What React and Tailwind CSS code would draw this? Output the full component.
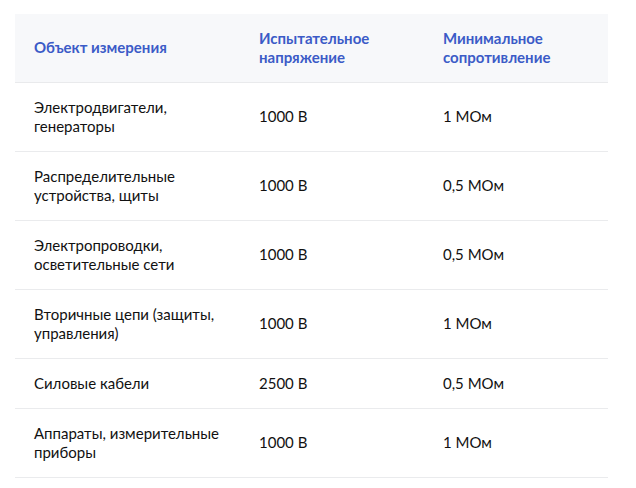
const rows = [
  ["Электродвигатели, генераторы", "1000 В", "1 МОм"],
  ["Распределительные устройства, щиты", "1000 В", "0,5 МОм"],
  ["Электропроводки, осветительные сети", "1000 В", "0,5 МОм"],
  ["Вторичные цепи (защиты, управления)", "1000 В", "1 МОм"],
  ["Силовые кабели", "2500 В", "0,5 МОм"],
  ["Аппараты, измерительные приборы", "1000 В", "1 МОм"],
];

export default function App() {
  return (
    <div className="w-[636px] h-[488px] bg-white pt-[14px] pl-[15px]" style={{ fontFamily: "Lato, 'Noto Sans', sans-serif" }}>
      <table className="w-[593px] border-collapse text-[15px] leading-[19px]">
        <thead>
          <tr className="bg-[#f7f8fa] border-b border-[#e9eaec] text-[#3b5bc7] text-left">
            <th className="w-[225px] h-[68px] pl-[19px] pr-2 font-bold align-middle">Объект измерения</th>
            <th className="w-[184px] pl-[19px] pr-2 font-bold align-middle">Испытательное<br />напряжение</th>
            <th className="pl-[19px] pr-2 font-bold align-middle">Минимальное<br />сопротивление</th>
          </tr>
        </thead>
        <tbody className="text-[#111111]">
          {rows.map((r, i) => (
            <tr key={i} className="border-b border-[#eaebed]">
              <td className="pl-[19px] pr-2 py-[15px] align-middle">{r[0]}</td>
              <td className="pl-[19px] pr-2 py-[15px] align-middle">{r[1]}</td>
              <td className="pl-[19px] pr-2 py-[15px] align-middle">{r[2]}</td>
            </tr>
          ))}
        </tbody>
      </table>
    </div>
  );
}
